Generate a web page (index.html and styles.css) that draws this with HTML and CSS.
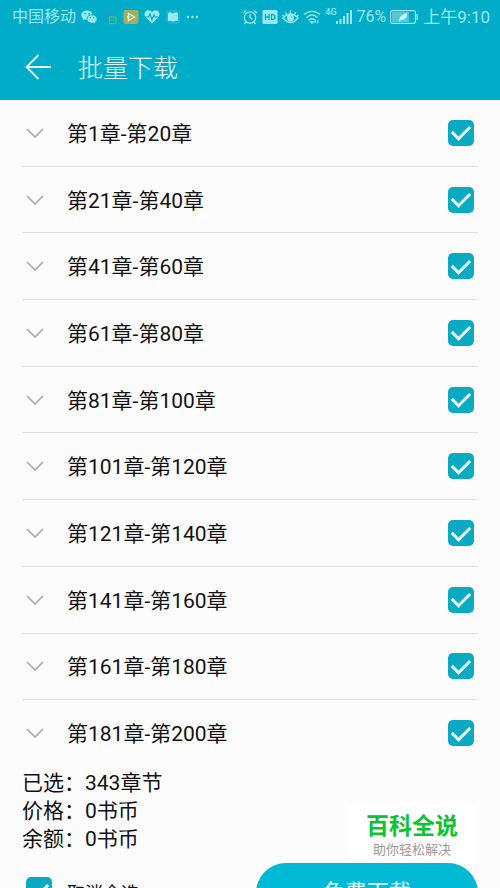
FILE: index.html
```
<!DOCTYPE html>
<html lang="zh-CN">
<head>
<meta charset="utf-8">
<meta name="viewport" content="width=device-width, initial-scale=1">
<title>批量下载</title>
<link rel="stylesheet" href="styles.css">
</head>
<body>
<svg class="defs" aria-hidden="true">
  <symbol id="chevron" viewBox="0 0 18 10"><path d="M1 1l8 8 8-8" fill="none" stroke="currentColor" stroke-width="1.6"/></symbol>
</svg>
<header class="top">
  <div class="status">
    <div class="status-left">
      <span>中国移动</span>
      <svg width="16" height="14" viewBox="0 0 16 14" fill="currentColor"><path fill-rule="evenodd" d="M6 .5C2.800.5.3 2.500.3 5.200c0 1.500.8 2.800 2 3.700L1.800 10.600l2-1c.6.2 1.200.3 1.800.3C5 6.800 7.500 4.300 11.500 4.300 11 2 8.700.5 6 .5zM4 2.700a.9.9 0 1 1 0 1.800.9.9 0 0 1 0-1.800zm4 0a.9.9 0 1 1 0 1.800.9.9 0 0 1 0-1.800z"/><path fill-rule="evenodd" d="M11 5.200c-2.700 0-4.700 1.700-4.700 3.800s2 3.800 4.700 3.800c.6 0 1.100-.1 1.600-.2l1.700.9-.4-1.500c1.100-.7 1.800-1.800 1.800-3 0-2.100-2.100-3.800-4.700-3.800zM9.400 7a.7.7 0 1 1 0 1.400.7.7 0 0 1 0-1.400zm3.300 0a.7.7 0 1 1 0 1.400.7.7 0 0 1 0-1.400z"/></svg>
      <svg width="16" height="16" viewBox="0 0 16 16" fill="none"><circle cx="7" cy="8" r="6" fill="#10a4c4"/><path d="M7.500 8h6.500v6.500H7.500z" stroke="#3cc08a" stroke-width="1.400"/><path d="M9 11.200h3.500" stroke="#3cc08a"/></svg>
      <svg width="16" height="16" viewBox="0 0 16 16"><rect x=".5" y="1" width="15" height="14" rx="2" fill="#a6ad62"/><path d="M5.500 4.500v7l6-3.500z" fill="none" stroke="#d5f0d4" stroke-width="1.400"/><path d="M4 7l4 1-4 1z" fill="#d5f0d4"/></svg>
      <svg width="16" height="14" viewBox="0 0 16 14"><path d="M8 13.500L1.500 7.300C-1 4 1.500.3 4.300.3 6 .3 7.300 1.200 8 2.500 8.700 1.200 10 .3 11.700.3c2.800 0 5.300 3.700 2.800 7z" fill="currentColor"/><path d="M0 7h4.500l1.500-3 2 5.500L10 5l1 2h5" fill="none" stroke="#00acc8" stroke-width="1.200"/></svg>
      <svg width="16" height="14" viewBox="0 0 16 14"><rect x="1" width="14" height="14" rx="3" fill="#16b6d3"/><path d="M3 3.500L4.500 2 8 3.500 11.500 2 13 3.500V11H9l-1 .8L7 11H3z" fill="currentColor"/></svg>
      <svg width="13" height="4" viewBox="0 0 13 4" fill="currentColor"><circle cx="2" cy="2" r="1.200"/><circle cx="6.500" cy="2" r="1.200"/><circle cx="11" cy="2" r="1.200"/></svg>
    </div>
    <div class="status-right">
      <svg width="16" height="16" viewBox="0 0 16 16" fill="none" stroke="currentColor" stroke-width="1.300"><circle cx="8" cy="8.500" r="5.700"/><path d="M8 5v3.700l2.300 1.500M1 4l3-2.700M15 4l-3-2.700M4 13l-1.500 2M12 13l1.500 2"/></svg>
      <svg width="16" height="16" viewBox="0 0 16 16"><rect x=".5" y="1" width="15" height="14" rx="1.500" fill="currentColor"/><path d="M3.500 5v6M7 5v6M3.500 8H7M9.500 5.600v4.800h1q2.500 0 2.500-2.400t-2.500-2.400z" fill="none" stroke="#00acc8" stroke-width="1.300"/></svg>
      <svg width="17" height="16" viewBox="0 0 17 16" fill="none" stroke="currentColor" stroke-width="1.300"><path d="M1 9q7.500-8 15 0-7.500 9-15 0z"/><circle cx="8.500" cy="9" r="2.800" fill="currentColor"/><path d="M8.500 4.500v-3M4.700 5.500L3 3M12.300 5.500L14 3M1.800 7.500L.5 6M15.200 7.500L16.500 6"/><circle cx="9.300" cy="8" r=".6" fill="#00acc8" stroke="none"/></svg>
      <svg width="18" height="16" viewBox="0 0 19 16" fill="none" stroke="currentColor" stroke-width="1.500"><path d="M1 5.500q8.500-7 17 0M3.500 8.500q6-5 12 0M6 11.300q3.500-3 7 0"/><path d="M8 13l1.500 1.500L11 13zM13 11.500v3M15.500 11.500v3" stroke-width="1.200"/></svg>
      <span class="net">4G</span>
      <svg class="bars" width="17" height="14" viewBox="0 0 17 14" fill="currentColor"><path d="M0 11h2v3H0zM3.500 9h2v5h-2zM7 6h2v8H7zM10.500 3h2v11h-2zM14 0h2v14h-2z"/></svg>
      <span>76%</span>
      <svg width="29" height="14" viewBox="0 0 29 14"><rect x=".6" y=".6" width="24.800" height="12.800" rx="2" fill="none" stroke="currentColor" stroke-width="1.100"/><rect x="2" y="2" width="17" height="10" fill="#55c6d6"/><path d="M9 11q0-6 8-8 1 7-6 7L9 12z" fill="#c3f5f5"/><path d="M26.500 4H28v6h-1.500z" fill="currentColor"/></svg>
      <span class="time">上午9:10</span>
    </div>
  </div>
  <div class="titlebar">
    <button class="back" type="button" aria-label="返回"><svg width="26" height="26" viewBox="0 0 26 26" fill="none" stroke="currentColor" stroke-width="1.800"><path d="M13.500 1L1.500 13l12 12M1.500 13H26"/></svg></button>
    <h1>批量下载</h1>
  </div>
</header>
<main>
  <ul class="chapters">
    <li><label for="c1"><svg class="chevron"><use href="#chevron"/></svg><span>第1章-第20章</span></label><input type="checkbox" id="c1" checked></li>
    <li><label for="c2"><svg class="chevron"><use href="#chevron"/></svg><span>第21章-第40章</span></label><input type="checkbox" id="c2" checked></li>
    <li><label for="c3"><svg class="chevron"><use href="#chevron"/></svg><span>第41章-第60章</span></label><input type="checkbox" id="c3" checked></li>
    <li><label for="c4"><svg class="chevron"><use href="#chevron"/></svg><span>第61章-第80章</span></label><input type="checkbox" id="c4" checked></li>
    <li><label for="c5"><svg class="chevron"><use href="#chevron"/></svg><span>第81章-第100章</span></label><input type="checkbox" id="c5" checked></li>
    <li><label for="c6"><svg class="chevron"><use href="#chevron"/></svg><span>第101章-第120章</span></label><input type="checkbox" id="c6" checked></li>
    <li><label for="c7"><svg class="chevron"><use href="#chevron"/></svg><span>第121章-第140章</span></label><input type="checkbox" id="c7" checked></li>
    <li><label for="c8"><svg class="chevron"><use href="#chevron"/></svg><span>第141章-第160章</span></label><input type="checkbox" id="c8" checked></li>
    <li><label for="c9"><svg class="chevron"><use href="#chevron"/></svg><span>第161章-第180章</span></label><input type="checkbox" id="c9" checked></li>
    <li><label for="c10"><svg class="chevron"><use href="#chevron"/></svg><span>第181章-第200章</span></label><input type="checkbox" id="c10" checked></li>
  </ul>
  <section class="summary">
    <p>已选：343章节</p>
    <p>价格：0书币</p>
    <p>余额：0书币</p>
    <aside class="brand"><strong>百科全说</strong><span>助你轻松解决</span></aside>
  </section>
</main>
<footer class="actions">
  <input type="checkbox" id="all" checked>
  <label for="all">取消全选</label>
  <button class="download" type="button">免费下载</button>
</footer>
</body>
</html>
```

FILE: styles.css
```
* {
  box-sizing: border-box;
}

body {
  margin: 0;
  height: 100vh;
  overflow: hidden;
  background: #fcfcfc;
  color: #111;
  font: 21px/28px Roboto, "Noto Sans CJK SC", sans-serif;
}

svg {
  display: block;
  flex: none;
}

.defs {
  position: absolute;
  width: 0;
  height: 0;
}

.top {
  background: #00acc8;
  color: #e4fcff;
}

.status {
  display: flex;
  justify-content: space-between;
  align-items: center;
  height: 34px;
  padding: 0 10px 0 12px;
  color: #9be9f0;
  font-size: 16px;
  line-height: 20px;
  white-space: nowrap;
}

.status-left,
.status-right {
  display: flex;
  align-items: center;
  gap: 5px;
}

.status-right {
  gap: 4px;
}

.net {
  align-self: flex-start;
  font-size: 9px;
  line-height: 10px;
  font-weight: 500;
}

.bars {
  margin-left: -5px;
}

.time {
  font-size: 17px;
}

.titlebar {
  display: flex;
  align-items: center;
  gap: 27px;
  height: 66px;
  padding: 0 25px;
}

.back {
  padding: 0;
  border: 0;
  background: none;
  color: inherit;
}

h1 {
  margin: 0;
  padding-top: 4px;
  font-size: 25px;
  line-height: 32px;
  font-weight: 300;
}

.chapters {
  display: grid;
  grid-auto-rows: 1fr;
  height: 667px;
  margin: 0 22px;
  padding: 0;
  list-style: none;
}

.chapters li {
  display: flex;
  align-items: center;
  justify-content: space-between;
  padding: 0 4px;
  border-bottom: 1px solid #dfdfdf;
}

.chapters li:last-child {
  border-bottom-color: transparent;
}

.chapters label {
  display: flex;
  flex: 1;
  align-items: center;
  gap: 23px;
}

.chapters span {
  padding-top: 2px;
}

.chevron {
  width: 18px;
  height: 10px;
  color: #a8a8a8;
}

input {
  appearance: none;
  flex: none;
  width: 26px;
  height: 26px;
  margin: 0;
  border-radius: 5px;
  background: #0aaac2;
}

input:checked {
  display: grid;
  place-items: center;
}

input:checked::before {
  content: "";
  width: 15px;
  height: 8px;
  border: solid #e6ffff;
  border-width: 0 0 3px 3px;
  transform: translateY(-2px) rotate(-45deg);
}

.summary {
  position: relative;
  padding: 2px 22px 0;
}

p {
  margin: 0;
}

.brand {
  position: absolute;
  right: 25px;
  top: 35px;
  display: flex;
  flex-direction: column;
  align-items: center;
  width: 126px;
  height: 62px;
  padding-top: 12px;
  background: #fff;
  color: #999;
  font-size: 13px;
  line-height: 20px;
}

.brand strong {
  color: #0bc431;
  font-size: 23px;
  line-height: 26px;
  font-weight: 700;
}

.actions {
  position: relative;
  display: flex;
  align-items: flex-start;
  gap: 15px;
  margin-top: 10px;
  padding: 0 22px 0 26px;
  font-size: 18px;
}

.actions input {
  margin-top: 14px;
}

.actions label {
  padding-top: 17px;
}

.download {
  width: 222px;
  height: 60px;
  margin-left: auto;
  border: 0;
  border-radius: 30px;
  background: #00bad5;
  color: #e4fcff;
  font: inherit;
  font-size: 22px;
}
```
